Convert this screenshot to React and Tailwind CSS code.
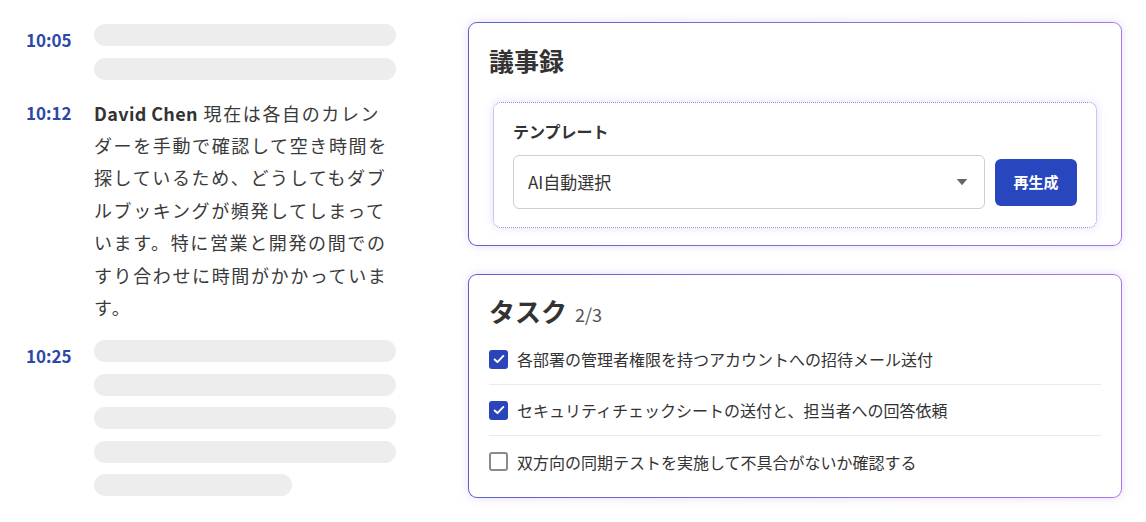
import React from 'react';

const font = { fontFamily: '"Noto Sans CJK JP", "Noto Sans", sans-serif' };

const transcript = [
  { time: '10:05', bars: ['full', 'full'] },
  {
    time: '10:12',
    speaker: 'David Chen',
    text: '現在は各自のカレンダーを手動で確認して空き時間を探しているため、どうしてもダブルブッキングが頻発してしまっています。特に営業と開発の間でのすり合わせに時間がかかっています。',
  },
  { time: '10:25', bars: ['full', 'full', 'full', 'full', 'part'] },
];

const tasks = [
  { label: '各部署の管理者権限を持つアカウントへの招待メール送付', done: true },
  { label: 'セキュリティチェックシートの送付と、担当者への回答依頼', done: true },
  { label: '双方向の同期テストを実施して不具合がないか確認する', done: false },
];

const Card = ({ children, className }) => (
  <div className="rounded-[9px] bg-gradient-to-r from-[#5a62c8] to-[#a878e8] p-px shadow-[0_0_10px_rgba(165,125,235,0.28)]">
    <div className={`rounded-[8px] bg-white ${className}`}>{children}</div>
  </div>
);

const Checkbox = ({ checked }) =>
  checked ? (
    <span className="w-[19px] h-[19px] rounded-[3px] bg-[#2a45b9] flex items-center justify-center shrink-0">
      <svg viewBox="0 0 16 16" className="w-[14px] h-[14px]" fill="none" stroke="white" strokeWidth="2.2" strokeLinecap="round" strokeLinejoin="round">
        <path d="M3 8.5l3.2 3L13 4.5" />
      </svg>
    </span>
  ) : (
    <span className="w-[19px] h-[19px] rounded-[3px] border-2 border-[#8a8a8a] bg-white shrink-0" />
  );

export default function App() {
  return (
    <div className="w-[1146px] h-[522px] bg-white flex text-[#333]" style={font}>
      {/* Transcript */}
      <div className="w-[420px] pl-[26px] pt-[24px] flex flex-col gap-[17px]">
        {transcript.map((item) => (
          <div key={item.time} className="flex">
            <div className="w-[68px] shrink-0 text-[17px] font-bold text-[#2c47a8] leading-[32.4px]">
              {item.time}
            </div>
            {item.bars ? (
              <div className="w-[302px] flex flex-col gap-[11.5px]">
                {item.bars.map((b, i) => (
                  <div
                    key={i}
                    className={`h-[22px] rounded-full bg-[#ededed] ${b === 'part' ? 'w-[198px]' : 'w-full'}`}
                  />
                ))}
              </div>
            ) : (
              <p className="w-[302px] text-[18px] leading-[32.4px] tracking-[0.09em] text-[#3a3a3a]">
                <span className="font-bold tracking-[0.02em] text-[#333]">{item.speaker}</span> {item.text}
              </p>
            )}
          </div>
        ))}
      </div>

      {/* Right panels */}
      <div className="w-[654px] ml-[48px] pt-[22px] flex flex-col gap-[28px]">
        <Card className="px-[20px] pt-[19px] pb-[17px]">
          <h2 className="text-[25px] font-bold leading-[36px] text-[#333]">議事録</h2>
          <div className="mt-[24px] mx-[4px] rounded-[8px] border border-dotted border-[#9d8cdc] shadow-[0_0_8px_rgba(170,140,235,0.3)] px-[19px] pt-[16px] pb-[18px]">
            <div className="text-[16px] font-bold leading-[24px] text-[#333]">テンプレート</div>
            <div className="mt-[12px] flex items-center gap-[10px]">
              <div className="w-[472px] h-[54px] rounded-[6px] border border-[#cfcfcf] flex items-center justify-between pl-[14px] pr-[16px]">
                <span className="text-[17px] text-[#333]">AI自動選択</span>
                <svg viewBox="0 0 12 8" className="w-[12px] h-[7px]">
                  <path d="M0 0h12L6 7z" fill="#666" />
                </svg>
              </div>
              <button className="w-[82px] h-[47px] rounded-[6px] bg-[#2846bd] text-white text-[15px] font-bold">
                再生成
              </button>
            </div>
          </div>
        </Card>

        <Card className="px-[20px] pt-[18px] pb-[10px]">
          <div className="flex items-baseline gap-[8px]">
            <h2 className="text-[26px] font-bold leading-[36px] text-[#333]">タスク</h2>
            <span className="text-[18px] text-[#555]">2/3</span>
          </div>
          <ul className="mt-[5px]">
            {tasks.map((t, i) => (
              <li
                key={i}
                className={`flex items-center gap-[9px] h-[51px] ${i < tasks.length - 1 ? 'border-b border-[#ebebeb]' : ''}`}
              >
                <Checkbox checked={t.done} />
                <span className="text-[16px] text-[#333]">{t.label}</span>
              </li>
            ))}
          </ul>
        </Card>
      </div>
    </div>
  );
}
